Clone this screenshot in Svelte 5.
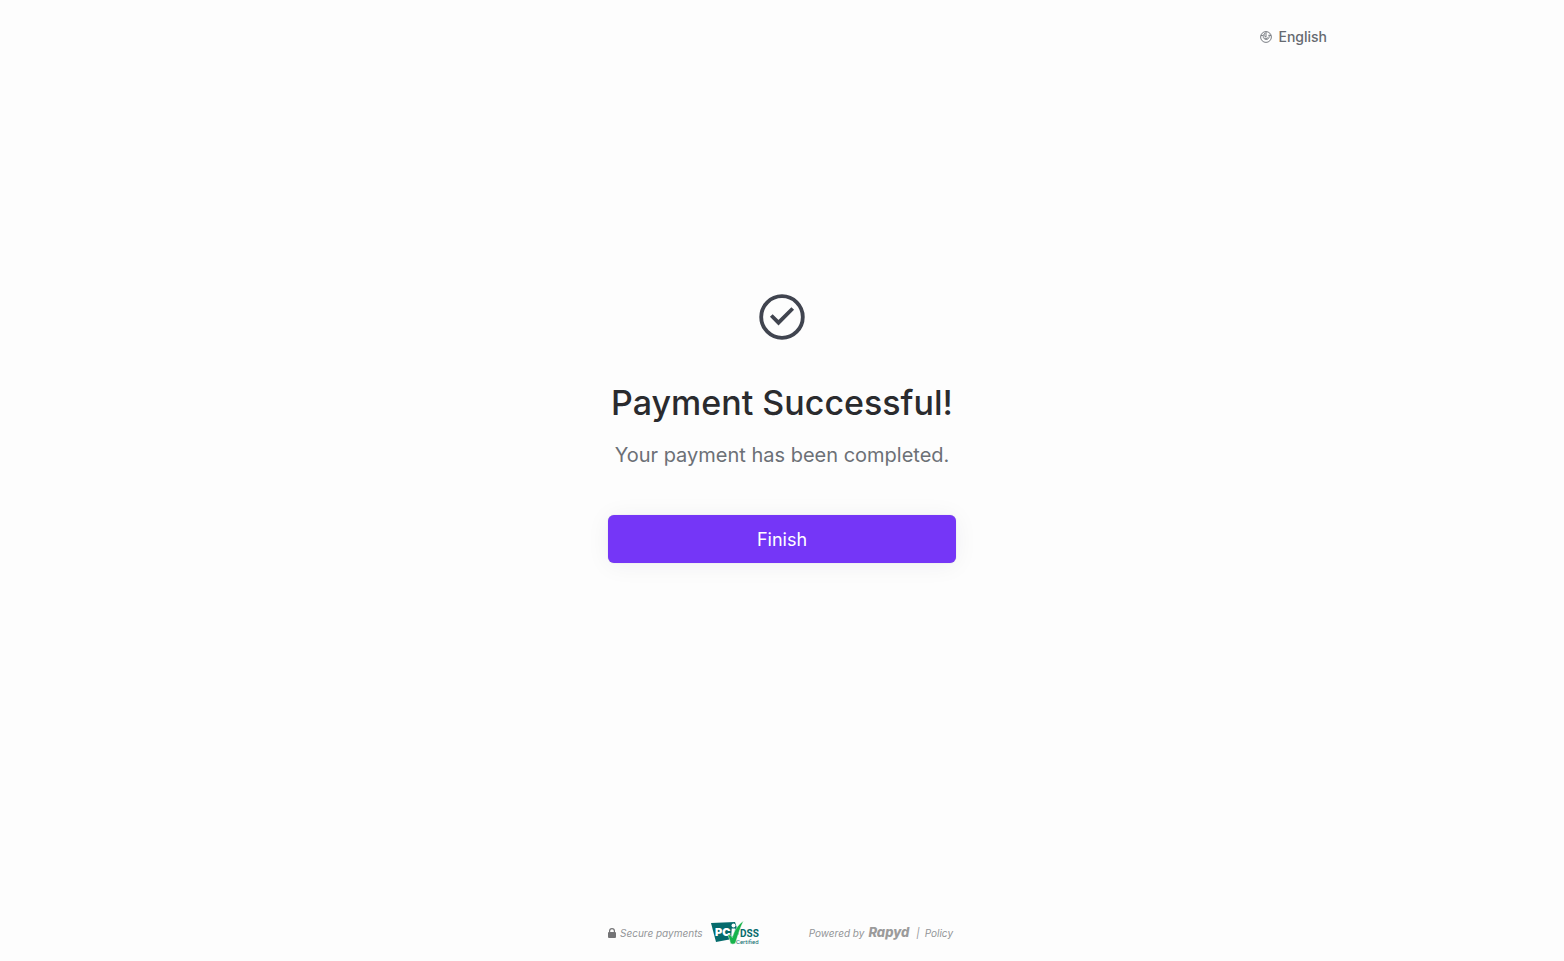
<script>
  let finished = $state(false);
</script>

<div class="page">
  <header>
    <button class="language" type="button">
      <svg viewBox="0 0 12 12" aria-hidden="true">
        <circle cx="6" cy="6" r="5.4" />
        <path d="M6 .6v5.600L3.700 4.200M1 4.700l2.700-.5 1.300-2.200M11 4.700 8.800 4M3.200 5.200a3 3 0 1 0 5.600-1.200M4.700 7a1.500 1.500 0 0 0 2.700-.6" />
      </svg>
      <span>English</span>
    </button>
  </header>

  <main>
    <svg class="check" viewBox="0 0 46 46" aria-hidden="true">
      <circle cx="23" cy="23" r="20.8" />
      <path d="M12.300 21.500l7.200 7.200 14.200-14.200" />
    </svg>
    <h1>Payment Successful!</h1>
    <p>Your payment has been completed.</p>
    <button class="finish" type="button" onclick={() => (finished = true)} disabled={finished}>Finish</button>
  </main>

  <footer>
    <div class="group">
      <svg class="lock" viewBox="0 0 8 10" aria-hidden="true">
        <path d="M1 4V3a3 3 0 0 1 6 0v1a1 1 0 0 1 1 1v4a1 1 0 0 1-1 1H1a1 1 0 0 1-1-1V5a1 1 0 0 1 1-1zm1.200 0h3.600V3a1.800 1.800 0 0 0-3.600 0z" />
      </svg>
      <span>Secure payments</span>
      <svg class="pci" viewBox="0 0 48 24" role="img" aria-label="PCI DSS Certified">
        <path d="M0 2l24-1 4 12-7 5-16 3z" fill="#056b6c" />
        <text x="4" y="15" class="pci-name">PC</text>
        <path d="M20.700 7.500h3.400l-1 7.500h-2.800z" fill="#fff" />
        <circle cx="22.500" cy="4.500" r="2" fill="#fff" />
        <path d="M16.500 14c2-.8 3.800 0 4.800 2.500C23 10 26.500 4 32.500 0c-3 6-5.500 14-8 22-.8 1.500-4.500 1.500-5.200 0-.5-3-1.300-6-2.800-8z" fill="#17b34b" stroke="#fdfdfd" stroke-width=".5" />
        <text x="29" y="16" class="dss">DSS</text>
        <text x="25" y="23" class="certified">Certified</text>
      </svg>
    </div>
    <div class="group">
      <span>Powered by</span>
      <strong>Rapyd</strong>
      <span class="bar">|</span>
      <a href="#policy">Policy</a>
    </div>
  </footer>
</div>

<style>
  :global(body) {
    margin: 0;
    background: #fdfdfd;
  }
  .page {
    min-height: 100vh;
    display: flex;
    flex-direction: column;
    font-family: Inter, sans-serif;
    box-sizing: border-box;
  }
  header {
    display: flex;
    justify-content: flex-end;
    width: 100%;
    max-width: 1090px;
    margin: 0 auto;
    padding: 27px 0 0;
  }
  .language {
    display: flex;
    align-items: center;
    gap: 6px;
    padding: 0;
    border: 0;
    background: none;
    color: #666a70;
    font: 500 14px/20px Inter, sans-serif;
    cursor: pointer;
  }
  .language svg {
    width: 12px;
    height: 12px;
    fill: none;
    stroke: #6b6f76;
    stroke-width: 0.9;
  }
  main {
    flex: 1;
    display: flex;
    flex-direction: column;
    align-items: center;
    justify-content: center;
    width: 100%;
    max-width: 348px;
    margin: 0 auto;
    padding-bottom: 110px;
    box-sizing: border-box;
  }
  .check {
    width: 46px;
    height: 46px;
    fill: none;
    stroke: #40444f;
    stroke-width: 3.8;
  }
  h1 {
    margin: 40px 0 0;
    color: #2a2b2e;
    font-size: 34px;
    font-weight: 500;
    line-height: 46px;
    white-space: nowrap;
  }
  p {
    margin: 14px 0 0;
    color: #6c7076;
    font-size: 20px;
    line-height: 30px;
    white-space: nowrap;
  }
  .finish {
    width: 100%;
    height: 48px;
    margin-top: 45px;
    padding: 2px 0 0;
    border: 0;
    border-radius: 6px;
    background: #7536f7;
    color: #fff;
    font: 400 18px/24px Inter, sans-serif;
    box-shadow: 0 0 1px rgba(40, 41, 61, 0.3), 0 2px 24px rgba(40, 41, 61, 0.06);
    cursor: pointer;
  }
  footer {
    display: flex;
    justify-content: space-between;
    align-items: center;
    width: 100%;
    max-width: 348px;
    margin: 0 auto;
    padding-bottom: 16px;
    color: #939598;
    font-size: 10px;
    font-style: italic;
    line-height: 24px;
  }
  .group {
    display: flex;
    align-items: center;
  }
  .group:last-child {
    padding-right: 3px;
  }
  .lock {
    width: 8px;
    height: 10px;
    margin-right: 4px;
    fill: #747476;
  }
  .pci {
    width: 48px;
    height: 24px;
    margin-left: 8px;
    overflow: visible;
    font-style: normal;
  }
  .pci-name {
    font: 900 11px Inter, sans-serif;
    fill: #fff;
  }
  .dss {
    font: 700 10px Roboto, sans-serif;
    fill: #056b6c;
  }
  .certified {
    font: 400 6px Roboto, sans-serif;
    fill: #056b6c;
  }
  strong {
    margin-left: 4px;
    padding-bottom: 1px;
    color: #9b9b9b;
    font-size: 13px;
    font-weight: 800;
  }
  .bar {
    margin: 0 5px 0 7px;
  }
  a {
    color: inherit;
    text-decoration: none;
  }
</style>
